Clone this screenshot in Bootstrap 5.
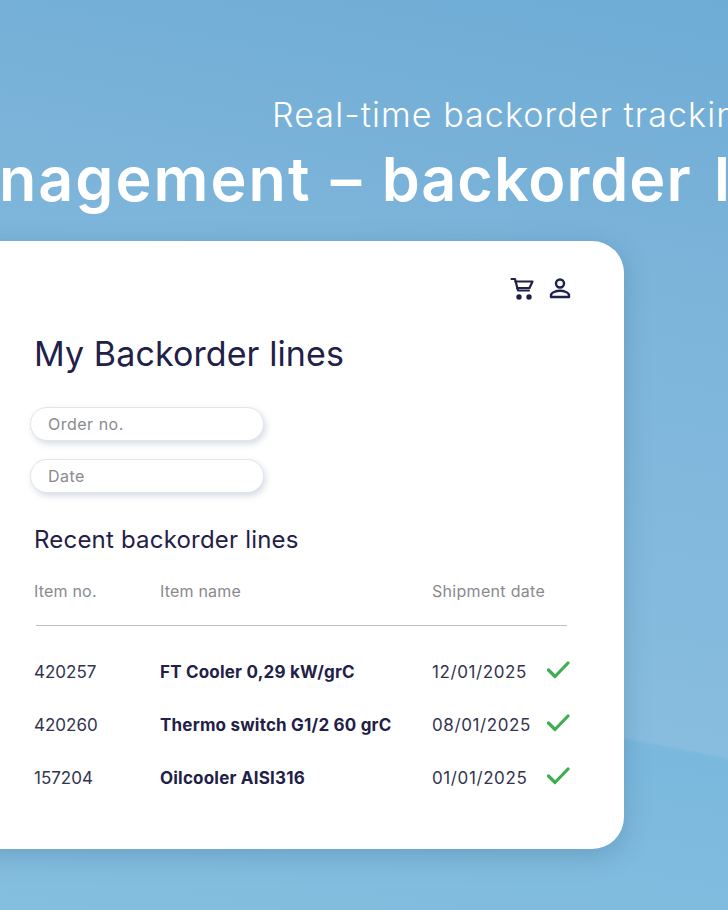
<!DOCTYPE html>
<html lang="en">
<head>
<meta charset="utf-8">
<title>Backorder lines</title>
<link href="https://cdn.jsdelivr.net/npm/bootstrap@5.3.0/dist/css/bootstrap.min.css" rel="stylesheet">
<style>
html,body{height:910px;overflow:hidden;}
body{font-family:Inter,"Noto Sans",sans-serif;color:#1f2148;
 background:linear-gradient(191.3deg,#6eacd5 0%,#7db4da 30%,#88bddf 71.7%,#7ab8dd 72.1%,#85bfdf 100%);
}
.hero-wrap{width:728px;height:910px;overflow:hidden;padding-top:95px;}
.hero-sub{font-size:34px;font-weight:350;line-height:40px;color:#fff;margin:0 0 0 272px;white-space:nowrap;letter-spacing:1.1px;}
.hero-title{font-size:61px;font-weight:600;line-height:72px;color:#fff;margin:8px 0 0 -1px;white-space:nowrap;letter-spacing:1px;word-spacing:3px;}
.title-start{letter-spacing:2px;}
.title-end{margin-left:3px;}
.panel{width:664px;height:608px;margin:26px 0 0 -40px;background:#fff;border-radius:32px;box-shadow:0 6px 26px rgba(50,90,130,.28);padding:32px 54px 0 75px;}
.panel-icons{height:32px;gap:13px;margin-right:-2px;}
.panel-heading{font-size:34px;font-weight:400;line-height:44px;margin:27px 0 31px -1px;letter-spacing:.1px;}
.pill{width:234px;height:34px;border:1px solid #e2e5ea;border-radius:17px;box-shadow:2px 3px 6px rgba(110,130,160,.28);padding:0 17px;font-size:16px;line-height:32px;color:#8a8a8e;margin:0 0 18px -5px;background:#fff;letter-spacing:.5px;}
.recent{font-size:24px;font-weight:400;line-height:32px;margin:31px 0 0 -1px;letter-spacing:.2px;}
.cols{display:grid;grid-template-columns:126px 272px 115px 1fr;align-items:center;}
.cols-head{font-size:16px;color:#8a8a8e;line-height:20px;margin:25px 0 0 -1px;letter-spacing:.2px;}
.head-date{letter-spacing:.3px;}
.rule{height:1px;background:#bdbfc4;margin:24px 3px 0 1px;}
.cols-row{font-size:17px;line-height:24px;color:#33344f;height:53px;margin-left:-1px;}
.cols-first{margin-top:19px;}
.item-name{font-size:17px;font-weight:700;color:#1f2148;letter-spacing:.2px;}
.ship-date{letter-spacing:.6px;}
.tick{display:block;margin-top:-1px;}
</style>
</head>
<body>
<div class="hero-wrap">
  <p class="hero-sub">Real-time backorder tracking</p>
  <h1 class="hero-title"><span class="title-start">nagement</span> – backorder <span class="title-end">lines</span></h1>
  <div class="panel">
    <div class="panel-icons d-flex justify-content-end align-items-center">
      <svg width="26" height="26" viewBox="0 0 26 26" fill="none" stroke="#1f2148" stroke-width="2.2" stroke-linejoin="round" stroke-linecap="round"><path d="M2.500 3h3.500l3 11.500h11"/><path d="M6.500 5.500h17l-3 6.500H8"/><circle cx="10" cy="21" r="1.600" fill="#1f2148"/><circle cx="20" cy="21" r="1.600" fill="#1f2148"/></svg>
      <svg width="24" height="26" viewBox="0 0 24 26" fill="none" stroke="#1f2148" stroke-width="2.400" stroke-linejoin="round"><circle cx="12" cy="7.500" r="4"/><path d="M3 21v-1.800c0-2.600 5-4.400 9-4.400s9 1.800 9 4.400V21z"/></svg>
    </div>
    <h2 class="panel-heading">My Backorder lines</h2>
    <div class="pill">Order no.</div>
    <div class="pill">Date</div>
    <h3 class="recent">Recent backorder lines</h3>
    <div class="cols cols-head"><span>Item no.</span><span>Item name</span><span class="head-date">Shipment date</span></div>
    <div class="rule"></div>
    <div class="cols cols-row cols-first"><span>420257</span><span class="item-name">FT Cooler 0,29 kW/grC</span><span class="ship-date">12/01/2025</span><svg class="tick" width="24" height="20" viewBox="0 0 24 20" fill="none" stroke="#3fae52" stroke-width="3.200" stroke-linecap="round" stroke-linejoin="round"><path d="M1.500 9l6.500 6.500L21 2"/></svg></div>
    <div class="cols cols-row"><span>420260</span><span class="item-name">Thermo switch G1/2 60 grC</span><span class="ship-date">08/01/2025</span><svg class="tick" width="24" height="20" viewBox="0 0 24 20" fill="none" stroke="#3fae52" stroke-width="3.200" stroke-linecap="round" stroke-linejoin="round"><path d="M1.500 9l6.500 6.500L21 2"/></svg></div>
    <div class="cols cols-row"><span>157204</span><span class="item-name">Oilcooler AISI316</span><span class="ship-date">01/01/2025</span><svg class="tick" width="24" height="20" viewBox="0 0 24 20" fill="none" stroke="#3fae52" stroke-width="3.200" stroke-linecap="round" stroke-linejoin="round"><path d="M1.500 9l6.500 6.500L21 2"/></svg></div>
  </div>
</div>
<script src="https://cdn.jsdelivr.net/npm/bootstrap@5.3.0/dist/js/bootstrap.bundle.min.js"></script>
</body>
</html>
